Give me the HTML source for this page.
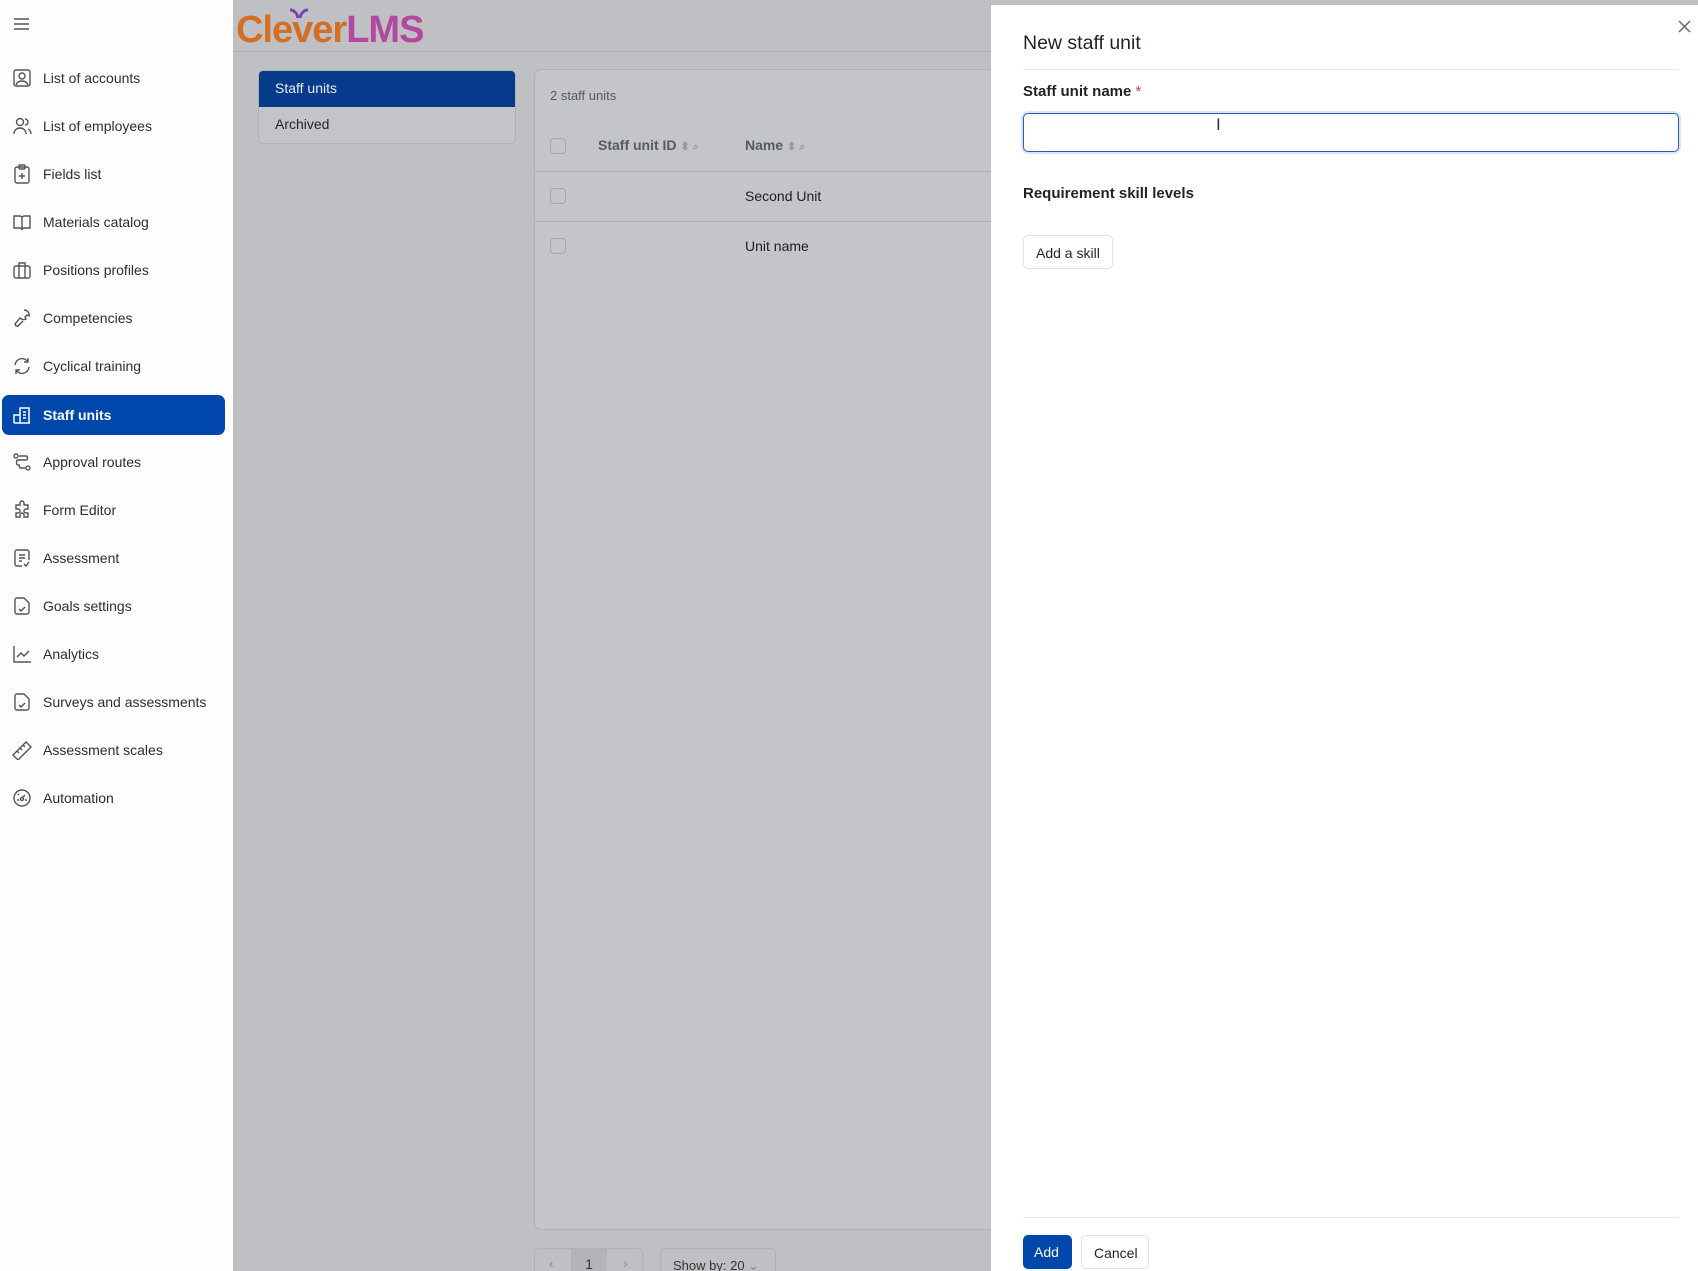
<!DOCTYPE html>
<html style="width:1698px;height:1271px;overflow:hidden"><head><meta charset="utf-8"><style>
*{box-sizing:border-box;margin:0;padding:0}
body{width:1698px;height:1271px;overflow:hidden;font-family:"Liberation Sans",Arial,sans-serif;background:#bfc0c4;position:relative;color:#1f2329}
.sb{position:absolute;left:0;top:0;width:233px;height:1271px;background:#fdfdfd}
.item{position:absolute;left:2px;width:223px;height:40px;display:flex;align-items:center;font-size:14px;color:#2a2e35}
.item svg{position:absolute;left:10px;top:10px}
.item span{position:absolute;left:41px}
.item.act{background:#0047ab;color:#fff;border-radius:7px;font-weight:bold}
.abs{position:absolute}
.cb{position:absolute;left:550px;width:16px;height:16px;border:1px solid #a3a5aa;border-radius:4px}
</style></head><body>
<div class="sb">
<svg class="abs" style="left:13px;top:17px" width="17" height="14" viewBox="0 0 17 14"><path d="M1 2h15M1 7h15M1 12h15" stroke="#555" stroke-width="1.6"/></svg>
<div class="item" style="top:58px"><svg width="20" height="20" viewBox="0 0 20 20" fill="none" stroke="#555" stroke-width="1.4"><rect x="2" y="2" width="16" height="16" rx="2"/><circle cx="10" cy="8" r="3"/><path d="M4 17c1-3 3-4 6-4s5 1 6 4"/></svg><span>List of accounts</span></div>
<div class="item" style="top:106px"><svg width="20" height="20" viewBox="0 0 20 20" fill="none" stroke="#555" stroke-width="1.4"><circle cx="8" cy="6" r="3.5"/><path d="M2 18c0-4 3-6 6-6s6 2 6 6M13 3a3 3 0 010 6M16 13c2 1 3 3 3 5"/></svg><span>List of employees</span></div>
<div class="item" style="top:154px"><svg width="20" height="20" viewBox="0 0 20 20" fill="none" stroke="#555" stroke-width="1.4"><rect x="3" y="3" width="14" height="16" rx="2"/><rect x="7" y="1" width="6" height="4" rx="1"/><path d="M10 9v6M7 12h6"/></svg><span>Fields list</span></div>
<div class="item" style="top:202px"><svg width="20" height="20" viewBox="0 0 20 20" fill="none" stroke="#555" stroke-width="1.4"><path d="M2 4h6c1 0 2 1 2 2v12c0-1-1-2-2-2H2zM18 4h-6c-1 0-2 1-2 2v12c0-1 1-2 2-2h6z"/></svg><span>Materials catalog</span></div>
<div class="item" style="top:250px"><svg width="20" height="20" viewBox="0 0 20 20" fill="none" stroke="#555" stroke-width="1.4"><rect x="2" y="6" width="16" height="12" rx="2"/><path d="M7 6V3h6v3M7 6v12M13 6v12"/></svg><span>Positions profiles</span></div>
<div class="item" style="top:298px"><svg width="20" height="20" viewBox="0 0 20 20" fill="none" stroke="#555" stroke-width="1.4"><path d="M12 2a5 5 0 015 6l-2-1-2 2 1 2a5 5 0 01-6-1L3 16l1 2 2 0 5-5"/></svg><span>Competencies</span></div>
<div class="item" style="top:346px"><svg width="20" height="20" viewBox="0 0 20 20" fill="none" stroke="#555" stroke-width="1.4"><path d="M3 9a7 7 0 0113-3M17 11a7 7 0 01-13 3M16 2v4h-4M4 18v-4h4"/></svg><span>Cyclical training</span></div>
<div class="item act" style="top:395px"><svg width="20" height="20" viewBox="0 0 20 20" fill="none" stroke="#fff" stroke-width="1.5"><path d="M2 18h16M8 18V3h9v15M2 18v-8h6M11 7h3M11 10h3M11 13h3"/></svg><span>Staff units</span></div>
<div class="item" style="top:442px"><svg width="20" height="20" viewBox="0 0 20 20" fill="none" stroke="#555" stroke-width="1.4"><circle cx="4" cy="4" r="2"/><circle cx="16" cy="16" r="2"/><path d="M7 4h7c2 0 2 4 0 4H6c-2 0-2 5 0 5h1l1 3h6"/></svg><span>Approval routes</span></div>
<div class="item" style="top:490px"><svg width="20" height="20" viewBox="0 0 20 20" fill="none" stroke="#555" stroke-width="1.4"><path d="M8 3a2 2 0 014 0v2h4v4h-2a2 2 0 000 4h2v4h-4v-2a2 2 0 00-4 0v2H4v-4h2a2 2 0 000-4H4V5h4z"/></svg><span>Form Editor</span></div>
<div class="item" style="top:538px"><svg width="20" height="20" viewBox="0 0 20 20" fill="none" stroke="#555" stroke-width="1.4"><path d="M10 18H5a2 2 0 01-2-2V4a2 2 0 012-2h10a2 2 0 012 2v8M7 7h6M7 10h6M7 13h3M12 16l2 2 3-4"/></svg><span>Assessment</span></div>
<div class="item" style="top:586px"><svg width="20" height="20" viewBox="0 0 20 20" fill="none" stroke="#555" stroke-width="1.4"><path d="M5 2h7l5 5v9a2 2 0 01-2 2H5a2 2 0 01-2-2V4a2 2 0 012-2zM7 13l2 2 4-4"/></svg><span>Goals settings</span></div>
<div class="item" style="top:634px"><svg width="20" height="20" viewBox="0 0 20 20" fill="none" stroke="#555" stroke-width="1.4"><path d="M2 2v16h17M5 13l4-4 3 3 5-5"/></svg><span>Analytics</span></div>
<div class="item" style="top:682px"><svg width="20" height="20" viewBox="0 0 20 20" fill="none" stroke="#555" stroke-width="1.4"><path d="M5 2h7l5 5v9a2 2 0 01-2 2H5a2 2 0 01-2-2V4a2 2 0 012-2zM7 13l2 2 4-4"/></svg><span>Surveys and assessments</span></div>
<div class="item" style="top:730px"><svg width="20" height="20" viewBox="0 0 20 20" fill="none" stroke="#555" stroke-width="1.4"><path d="M1 15L14 2l5 5L6 20zM5 11l2 2M8 8l2 2M11 5l2 2"/></svg><span>Assessment scales</span></div>
<div class="item" style="top:778px"><svg width="20" height="20" viewBox="0 0 20 20" fill="none" stroke="#555" stroke-width="1.4"><circle cx="10" cy="10" r="8"/><path d="M10 10l3-3M5 12h2M13 12h2M6 6l1 1"/><circle cx="10" cy="11" r="1.5"/></svg><span>Automation</span></div>
</div>
<div class="abs" style="left:233px;top:0;width:1465px;height:52px;border-bottom:1px solid #aeafb3"></div>
<div class="abs" style="left:236px;top:8px;font-size:38px;font-weight:bold;letter-spacing:-1px;line-height:44px"><span style="color:#d26f22">Clever</span><span style="color:#b4489c">LMS</span></div>
<svg class="abs" style="left:288px;top:8px" width="22" height="12" viewBox="0 0 22 12"><path d="M2 2c4 0 7 3 8 8M20 2c-4 0-7 3-8 8" stroke="#7b3fb0" stroke-width="3" fill="none"/></svg>
<div class="abs" style="left:258px;top:70px;width:258px;height:74px;border:1px solid #b0b1b5;border-radius:5px;background:#c3c4c8;overflow:hidden">
<div style="height:36px;background:#063a8a;color:#e8ecf5;font-size:14px;padding:9px 0 0 16px">Staff units</div>
<div style="font-size:14px;padding:9px 0 0 16px;color:#22262c">Archived</div></div>
<div class="abs" style="left:534px;top:69px;width:500px;height:1161px;border:1px solid #b0b1b5;border-radius:7px;background:#c4c5c9"></div>
<div class="abs" style="left:550px;top:88px;font-size:13px;color:#555a62">2 staff units</div>
<div class="cb" style="top:138px"></div><div class="cb" style="top:188px"></div><div class="cb" style="top:238px"></div>
<div class="abs" style="left:598px;top:137px;font-size:14px;font-weight:bold;color:#555a64">Staff unit ID <span style="color:#999;font-size:11px">⬍ ⌕</span></div>
<div class="abs" style="left:745px;top:137px;font-size:14px;font-weight:bold;color:#555a64">Name <span style="color:#999;font-size:11px">⬍ ⌕</span></div>
<div class="abs" style="left:535px;top:171px;width:460px;height:1px;background:#adaeb2"></div>
<div class="abs" style="left:535px;top:221px;width:460px;height:1px;background:#adaeb2"></div>
<div class="abs" style="left:745px;top:188px;font-size:14px;color:#1b1f26">Second Unit</div>
<div class="abs" style="left:745px;top:238px;font-size:14px;color:#1b1f26">Unit name</div>
<div class="abs" style="left:534px;top:1248px;width:109px;height:23px;border:1px solid #b0b1b5;border-bottom:none;border-radius:5px 5px 0 0;overflow:hidden;font-size:14px;color:#888">
<span class="abs" style="left:14px;top:6px">‹</span><div class="abs" style="left:36px;top:0;width:36px;height:30px;background:#b3b4b9;color:#333;text-align:center;padding-top:7px">1</div><span class="abs" style="left:88px;top:6px">›</span></div>
<div class="abs" style="left:660px;top:1248px;width:116px;height:23px;border:1px solid #b0b1b5;border-bottom:none;border-radius:5px 5px 0 0;font-size:13px;color:#333;padding:9px 0 0 12px;overflow:hidden">Show by: 20 <span style="color:#888">⌄</span></div>
<div class="abs" style="left:991px;top:5px;width:707px;height:1266px;background:#fff">
<div class="abs" style="left:32px;top:27px;font-size:19.5px;color:#1f2329">New staff unit</div>
<svg class="abs" style="left:687px;top:15px" width="13" height="13" viewBox="0 0 13 13"><path d="M1 1l11 11M12 1L1 12" stroke="#666" stroke-width="1.5"/></svg>
<div class="abs" style="left:32px;top:64px;width:656px;height:1px;background:#e6e7ea"></div>
<div class="abs" style="left:32px;top:78px;font-size:15px;font-weight:bold;color:#1f2329">Staff unit name <span style="color:#e23c3c;font-weight:normal">*</span></div>
<div class="abs" style="left:32px;top:108px;width:656px;height:39px;border:1.5px solid #2a5db0;border-radius:5px;box-shadow:0 0 0 2px #dbe5f5"></div>
<div class="abs" style="left:225px;top:110px;font-size:17px;color:#333">I</div>
<div class="abs" style="left:32px;top:180px;font-size:15px;font-weight:bold;color:#1f2329">Requirement skill levels</div>
<div class="abs" style="left:32px;top:230px;width:90px;height:34px;border:1px solid #dfe0e3;border-radius:5px;font-size:14px;padding:9px 0 0 12px">Add a skill</div>
<div class="abs" style="left:32px;top:1212px;width:656px;height:1px;background:#e6e7ea"></div>
<div class="abs" style="left:32px;top:1230px;width:49px;height:34px;background:#0047ab;border-radius:5px;color:#fff;font-size:14px;padding:9px 0 0 11px">Add</div>
<div class="abs" style="left:90px;top:1230px;width:68px;height:34px;border:1px solid #dfe0e3;border-radius:5px;font-size:14px;padding:9px 0 0 12px">Cancel</div>
</div>
</body></html>
